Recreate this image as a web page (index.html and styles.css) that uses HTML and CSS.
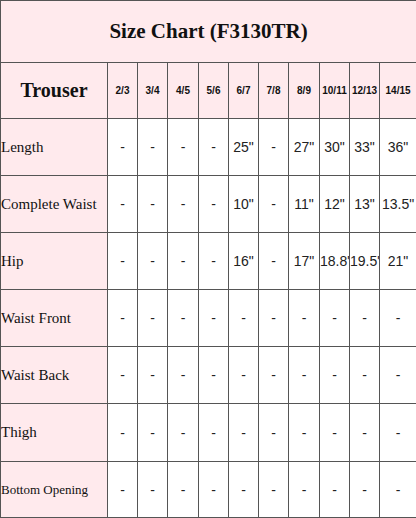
FILE: index.html
```html
<!DOCTYPE html>
<html>
<head>
<meta charset="utf-8">
<link rel="stylesheet" href="styles.css">
</head>
<body>
<table class="chart">
  <colgroup>
    <col class="c-label">
    <col class="c30"><col class="c30"><col class="c31"><col class="c30"><col class="c30"><col class="c30"><col class="c31"><col class="c30"><col class="c30"><col class="c37">
  </colgroup>
  <tr class="r-title"><td class="title" colspan="11">Size Chart (F3130TR)</td></tr>
  <tr class="r-head">
    <td class="label head-label">Trouser</td>
    <td class="size">2/3</td><td class="size">3/4</td><td class="size">4/5</td><td class="size">5/6</td><td class="size">6/7</td><td class="size">7/8</td><td class="size">8/9</td><td class="size">10/11</td><td class="size">12/13</td><td class="size">14/15</td>
  </tr>
  <tr class="r-data">
    <td class="label">Length</td>
    <td class="val">-</td><td class="val">-</td><td class="val">-</td><td class="val">-</td><td class="val">25"</td><td class="val">-</td><td class="val">27"</td><td class="val">30"</td><td class="val">33"</td><td class="val">36"</td>
  </tr>
  <tr class="r-data">
    <td class="label">Complete Waist</td>
    <td class="val">-</td><td class="val">-</td><td class="val">-</td><td class="val">-</td><td class="val">10"</td><td class="val">-</td><td class="val">11"</td><td class="val">12"</td><td class="val">13"</td><td class="val">13.5"</td>
  </tr>
  <tr class="r-data">
    <td class="label">Hip</td>
    <td class="val">-</td><td class="val">-</td><td class="val">-</td><td class="val">-</td><td class="val">16"</td><td class="val">-</td><td class="val">17"</td><td class="val">18.8"</td><td class="val">19.5"</td><td class="val">21"</td>
  </tr>
  <tr class="r-data">
    <td class="label">Waist Front</td>
    <td class="val">-</td><td class="val">-</td><td class="val">-</td><td class="val">-</td><td class="val">-</td><td class="val">-</td><td class="val">-</td><td class="val">-</td><td class="val">-</td><td class="val">-</td>
  </tr>
  <tr class="r-data">
    <td class="label">Waist Back</td>
    <td class="val">-</td><td class="val">-</td><td class="val">-</td><td class="val">-</td><td class="val">-</td><td class="val">-</td><td class="val">-</td><td class="val">-</td><td class="val">-</td><td class="val">-</td>
  </tr>
  <tr class="r-data r-tall">
    <td class="label">Thigh</td>
    <td class="val">-</td><td class="val">-</td><td class="val">-</td><td class="val">-</td><td class="val">-</td><td class="val">-</td><td class="val">-</td><td class="val">-</td><td class="val">-</td><td class="val">-</td>
  </tr>
  <tr class="r-data r-last">
    <td class="label small">Bottom Opening</td>
    <td class="val">-</td><td class="val">-</td><td class="val">-</td><td class="val">-</td><td class="val">-</td><td class="val">-</td><td class="val">-</td><td class="val">-</td><td class="val">-</td><td class="val">-</td>
  </tr>
</table>
</body>
</html>
```

FILE: styles.css
```css
html, body {
  margin: 0;
  padding: 0;
  background: #ffffff;
}

.chart {
  width: 416px;
  table-layout: fixed;
  border-collapse: collapse;
  font-family: "Liberation Sans", Arial, sans-serif;
  color: #1a1a1a;
}

.c-label { width: 107px; }
.c30 { width: 30px; }
.c31 { width: 31px; }
.c37 { width: 37px; }

.chart td {
  border: 1px solid #555555;
  padding: 0;
  vertical-align: middle;
  white-space: nowrap;
  overflow: hidden;
}

.r-title td { height: 61px; }
.r-head td { height: 55px; }
.r-data td { height: 56px; }
.r-tall td { height: 57px; }
.r-last td { height: 55px; }

.title {
  background: #ffeaed;
  text-align: center;
  font-family: "Liberation Serif", "Times New Roman", serif;
  font-weight: bold;
  font-size: 21px;
  color: #111111;
  padding-top: 2px;
}

.label {
  background: #ffeaed;
  font-family: "Liberation Serif", "Times New Roman", serif;
  font-size: 15px;
  color: #111111;
  padding-left: 3px;
}

.head-label {
  text-align: center;
  font-weight: bold;
  font-size: 20px;
  padding-left: 0;
}

.label.small {
  font-size: 13px;
}

.size {
  background: #ffeaed;
  text-align: center;
  font-weight: bold;
  font-size: 10px;
  color: #111111;
}

.val {
  text-align: center;
  font-size: 14px;
  color: #222222;
}
```
